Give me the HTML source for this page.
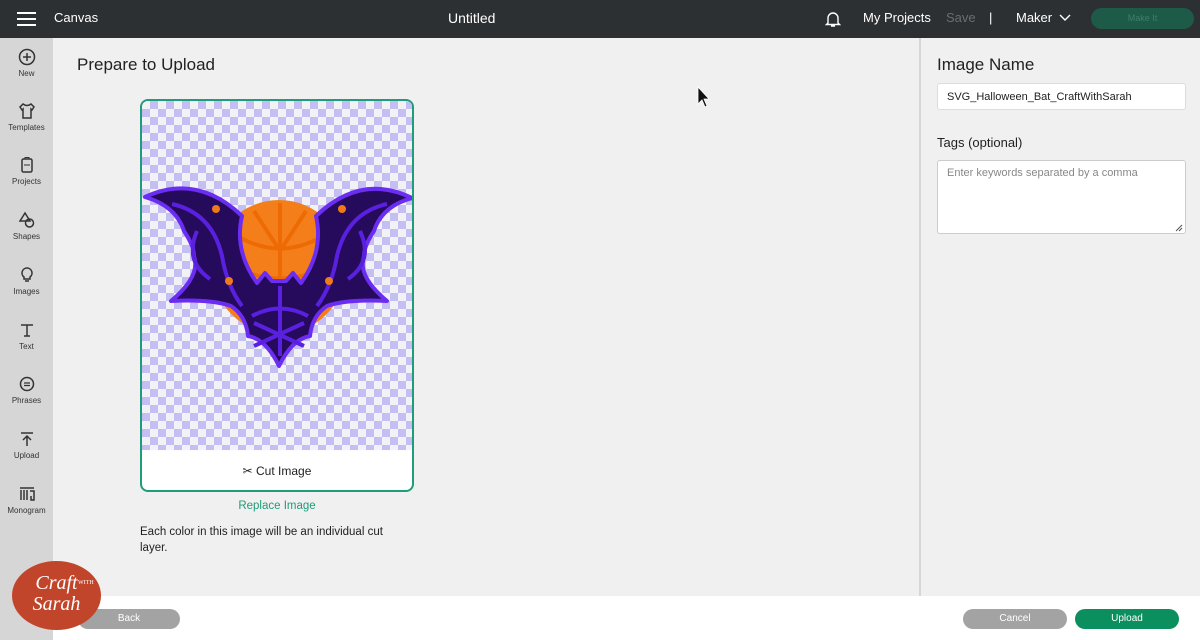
<!DOCTYPE html>
<html><head><meta charset="utf-8"><style>
*{margin:0;padding:0;box-sizing:border-box}
body{width:1200px;height:640px;overflow:hidden;font-family:"Liberation Sans",sans-serif;background:#f0f0f0;position:relative}
.top{position:absolute;left:0;top:0;width:1200px;height:38px;background:#2d3033;color:#fff}
.top span{position:absolute;top:10px;font-size:13px}
.side{position:absolute;left:0;top:38px;width:53px;height:602px;background:#d6d6d6}
.it{position:absolute;left:0;width:53px;text-align:center;font-size:8px;color:#333}
.it svg{display:block;margin:0 auto 3px}
.bottom{position:absolute;left:53px;top:596px;width:1147px;height:44px;background:#fff}
.btn{position:absolute;height:20px;border-radius:10px;color:#fff;font-size:10px;text-align:center;line-height:20px}
.card{position:absolute;left:140px;top:99px;width:274px;height:393px;border:2px solid #1f9c7a;border-radius:8px;background:#fff;overflow:hidden}
.chk{position:absolute;left:0;top:0;width:270px;height:349px;background-color:#f2f2f6;background-image:linear-gradient(45deg,#c4bff3 25%,transparent 25%,transparent 75%,#c4bff3 75%),linear-gradient(45deg,#c4bff3 25%,transparent 25%,transparent 75%,#c4bff3 75%);background-size:16px 16px;background-position:0 0,8px 8px}
</style></head><body>
<div class="top">
<div style="position:absolute;left:17px;top:12px;width:19px;height:2px;background:#fff;box-shadow:0 6px 0 #fff,0 12px 0 #fff"></div>
<span style="left:54px">Canvas</span>
<span style="left:448px;font-size:14px">Untitled</span>
<svg style="position:absolute;left:825px;top:11px" width="16" height="17" viewBox="0 0 16 17"><path d="M3 12 V7 a5 5 0 0 1 10 0 V12 L14.5 13.5 H1.5Z M6 15 h4" fill="none" stroke="#fff" stroke-width="1.4"/></svg>
<span style="left:863px">My Projects</span>
<span style="left:946px;color:#6a6d70">Save</span>
<span style="left:989px">|</span>
<span style="left:1016px">Maker</span>
<svg style="position:absolute;left:1059px;top:14px" width="12" height="8"><path d="M1 1 L6 6 L11 1" fill="none" stroke="#fff" stroke-width="1.4"/></svg>
<div style="position:absolute;left:1091px;top:8px;width:103px;height:21px;border-radius:11px;background:#1d5a48;color:#3f7e6a;font-size:9px;text-align:center;line-height:21px">Make It</div>
</div>
<div class="side">
<div class="it" style="top:10px"><svg width="18" height="18"><circle cx="9" cy="9" r="7.5" fill="none" stroke="#333" stroke-width="1.5"/><path d="M9 5v8M5 9h8" stroke="#333" stroke-width="1.5"/></svg>New</div>
<div class="it" style="top:64px"><svg width="18" height="18"><path d="M5 2 L2 5 L4 8 L5 7 V16 H13 V7 L14 8 L16 5 L13 2 Q9 5 5 2Z" fill="none" stroke="#333" stroke-width="1.5"/></svg>Templates</div>
<div class="it" style="top:118px"><svg width="18" height="18"><rect x="4" y="3" width="10" height="13" rx="1.5" fill="none" stroke="#333" stroke-width="1.5"/><path d="M6 9h6M7 3V1.5h4V3" stroke="#333" fill="none"/></svg>Projects</div>
<div class="it" style="top:173px"><svg width="18" height="18"><path d="M7 2 L12 10 H2Z" fill="none" stroke="#333" stroke-width="1.5"/><circle cx="11.5" cy="12" r="4" fill="none" stroke="#333" stroke-width="1.5"/></svg>Shapes</div>
<div class="it" style="top:228px"><svg width="18" height="18"><path d="M9 2 a5 5 0 0 1 3 9 V13 H6 V11 a5 5 0 0 1 3-9Z M7 15h4" fill="none" stroke="#333" stroke-width="1.5"/></svg>Images</div>
<div class="it" style="top:283px"><svg width="18" height="18"><path d="M3 4h12M9 4v11M6 15h6" stroke="#333" stroke-width="1.5"/></svg>Text</div>
<div class="it" style="top:337px"><svg width="18" height="18"><circle cx="9" cy="9" r="6.5" fill="none" stroke="#333" stroke-width="1.5"/><path d="M6 8h6M6 10.5h6" stroke="#333" stroke-width="1.2"/></svg>Phrases</div>
<div class="it" style="top:392px"><svg width="18" height="18"><path d="M3 3h12M9 16V6M5 10l4-4 4 4" fill="none" stroke="#333" stroke-width="1.5"/></svg>Upload</div>
<div class="it" style="top:447px"><svg width="18" height="18"><path d="M2 3h14M3 5v10M6 5v10M9 5v10M12 6h4v9h-3v-4" fill="none" stroke="#333" stroke-width="1.5"/></svg>Monogram</div>
</div>
<div style="position:absolute;left:77px;top:55px;font-size:17px;color:#222">Prepare to Upload</div>
<div class="card">
<div class="chk"></div>
<svg style="position:absolute;left:0;top:0" width="274" height="350" viewBox="0 0 274 350">
<circle cx="137" cy="166" r="67" fill="#f47f1a"/>
<g stroke="#ee6a05" stroke-width="4" fill="none"><path d="M95 135 Q138 160 181 135 M90 165 Q138 190 186 165 M138 102 V230 M112 110 L138 150 L164 110 M100 210 Q138 195 176 210"/></g>
<path d="M3,96 Q55,72 100,115 Q92,150 115,182 L123,172 L130,180 L144,180 L151,172 L159,182 Q182,150 174,115 Q219,72 270,97 Q240,105 232,130 Q222,145 222,155 Q215,175 245,200 Q205,198 185,205 Q170,215 168,235 Q150,238 137,265 Q124,238 106,235 Q104,215 89,205 Q69,198 29,200 Q59,175 52,155 Q52,145 42,130 Q34,105 3,96Z" fill="#260b5c" stroke="#6b2df2" stroke-width="4" stroke-linejoin="round"/>
<g stroke="#5a20e0" stroke-width="4" fill="none">
<path d="M30 103 Q70 112 80 155 Q85 185 100 205 M55 130 Q42 160 68 178 M175 205 Q190 185 195 155 Q205 112 245 103 M218 130 Q232 160 206 178 M110 215 Q138 200 166 215 M138 185 V255 M112 222 L162 245 M162 222 L112 245"/>
</g>
<g fill="#f07a1a"><circle cx="74" cy="108" r="4"/><circle cx="200" cy="108" r="4"/><circle cx="87" cy="180" r="4"/><circle cx="187" cy="180" r="4"/></g>
</svg>
<div style="position:absolute;left:0;top:363px;width:270px;text-align:center;font-size:12px;color:#222">✂ Cut Image</div>
</div>
<div style="position:absolute;left:140px;top:500px;width:274px;text-align:center;font-size:11.5px;color:#1f9c7a">Replace Image</div>
<div style="position:absolute;left:140px;top:524px;width:255px;font-size:11.5px;color:#222;line-height:16px">Each color in this image will be an individual cut layer.</div>
<div style="position:absolute;left:919px;top:38px;width:2px;height:558px;background:#d6d6d6"></div>
<div style="position:absolute;left:937px;top:55px;font-size:17px;color:#222">Image Name</div>
<div style="position:absolute;left:937px;top:83px;width:249px;height:27px;background:#fff;border:1px solid #ddd;border-radius:3px;font-size:11px;padding:7px 9px;color:#222">SVG_Halloween_Bat_CraftWithSarah</div>
<div style="position:absolute;left:937px;top:135px;font-size:13px;color:#222">Tags (optional)</div>
<div style="position:absolute;left:937px;top:160px;width:249px;height:74px;background:#fff;border:1px solid #ccc;border-radius:3px;font-size:11px;padding:6px 9px;color:#888">Enter keywords separated by a comma</div>
<svg style="position:absolute;left:1175px;top:224px" width="8" height="8"><path d="M1 7L7 1M4 7L7 4" stroke="#555"/></svg>
<div class="bottom"></div>
<div class="btn" style="left:78px;top:609px;width:102px;background:#a3a3a3">Back</div>
<div class="btn" style="left:963px;top:609px;width:104px;background:#a3a3a3">Cancel</div>
<div class="btn" style="left:1075px;top:609px;width:104px;background:#0b8f5e">Upload</div>
<div style="position:absolute;left:12px;top:561px;width:89px;height:69px;border-radius:50%;background:#c1452b;color:#fff;font-family:'Liberation Serif',serif;font-style:italic;text-align:center;font-size:20px;line-height:21px;padding-top:12px">Craft<br>Sarah</div>
<div style="position:absolute;left:78px;top:580px;font-size:6px;color:#fff;font-family:'Liberation Serif',serif">WITH</div>
<svg style="position:absolute;left:697px;top:86px" width="14" height="22"><path d="M1 1 V18 L5 14 L8 21 L10 20 L7 13 L12 13Z" fill="#111" stroke="#fff" stroke-width="0.8"/></svg>
</body></html>
